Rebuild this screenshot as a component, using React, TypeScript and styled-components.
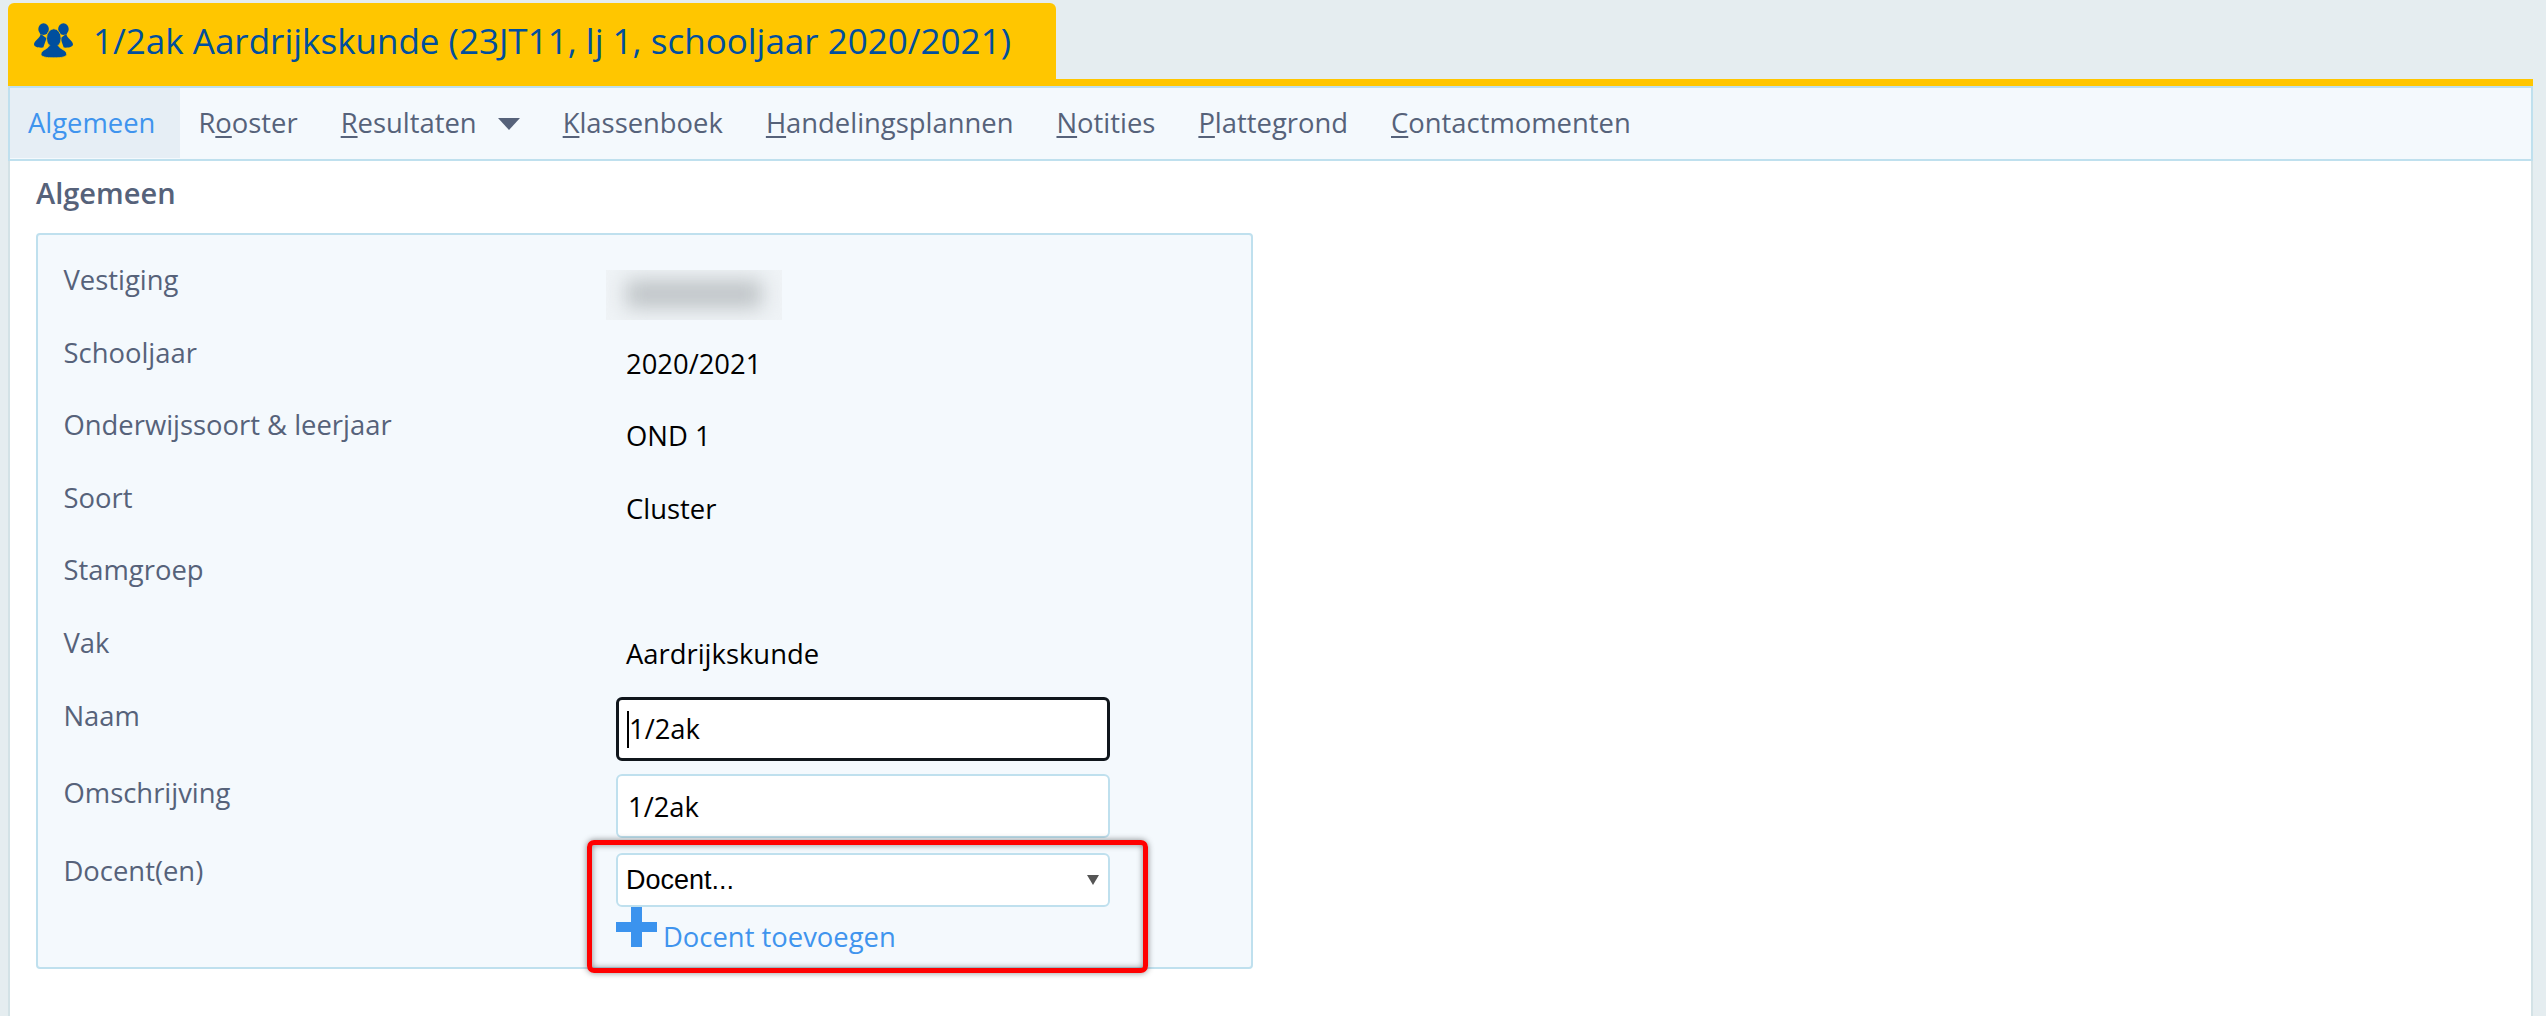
import React from "react";
import styled, { createGlobalStyle } from "styled-components";

const GlobalStyle = createGlobalStyle`
    html, body {
        margin: 0;
        padding: 0;
        height: 100%;
        background: #e5edf0;
        font-family: "Open Sans", sans-serif;
    }
    #root {
        height: 100%;
    }
`;

const rows = [
    { label: "Schooljaar", value: "2020/2021" },
    { label: "Onderwijssoort & leerjaar", value: "OND 1" },
    { label: "Soort", value: "Cluster" },
    { label: "Stamgroep", value: "" },
    { label: "Vak", value: "Aardrijkskunde" },
];

const GroupIcon: React.FC = () => (
    <svg width="39" height="35" viewBox="0 0 118 105" fill="#004f9e">
        <ellipse cx="29" cy="18" rx="16" ry="18" />
        <ellipse cx="89" cy="18" rx="16" ry="18" />
        <path d="M20 32 C20 46 0 52 0 64 C0 72 12 75 28 74 L38 46 Z" />
        <path d="M98 32 C98 46 118 52 118 64 C118 72 106 75 90 74 L80 46 Z" />
        <ellipse cx="60" cy="46" rx="22" ry="29" stroke="#ffc600" strokeWidth="2.5" />
        <path
            d="M46 66 C46 78 21 80 21 94 C21 102 36 105 60 105 C84 105 99 102 99 94 C99 80 74 78 74 66 Z"
            stroke="#ffc600"
            strokeWidth="2.5"
        />
        <ellipse cx="60" cy="58" rx="14" ry="16" />
    </svg>
);

const PlusIcon: React.FC = () => (
    <svg width="41" height="40" viewBox="0 0 41 40" fill="#3b93ee">
        <path d="M15 0h11v15h15v10H26v15H15V25H0V15h15z" />
    </svg>
);

export default function App() {
    return (
        <Page>
            <GlobalStyle />
            <TabStrip>
                <Tab>
                    <GroupIcon />
                    <TabTitle>1/2ak Aardrijkskunde (23JT11, lj 1, schooljaar 2020/2021)</TabTitle>
                </Tab>
            </TabStrip>
            <Panel>
                <Nav>
                    <NavItem $active>Algemeen</NavItem>
                    <NavItem>R<u>o</u>oster</NavItem>
                    <NavItem>
                        <u>R</u>esultaten
                        <Caret />
                    </NavItem>
                    <NavItem><u>K</u>lassenboek</NavItem>
                    <NavItem><u>H</u>andelingsplannen</NavItem>
                    <NavItem><u>N</u>otities</NavItem>
                    <NavItem><u>P</u>lattegrond</NavItem>
                    <NavItem><u>C</u>ontactmomenten</NavItem>
                </Nav>
                <Content>
                    <Heading>Algemeen</Heading>
                    <FieldBox>
                        <Row>
                            <Label>Vestiging</Label>
                            <BlurBox>
                                <BlurText />
                            </BlurBox>
                        </Row>
                        {rows.map((row) => (
                            <Row key={row.label}>
                                <Label>{row.label}</Label>
                                <Value>{row.value}</Value>
                            </Row>
                        ))}
                        <InputRow>
                            <Label>Naam</Label>
                            <InputCell>
                                <TextInput $focused defaultValue="1/2ak" />
                                <TextCaret />
                            </InputCell>
                        </InputRow>
                        <InputRow>
                            <Label>Omschrijving</Label>
                            <InputCell>
                                <TextInput defaultValue="1/2ak" />
                            </InputCell>
                        </InputRow>
                        <DocentRow>
                            <Label>Docent(en)</Label>
                            <InputCell>
                                <SelectBox>
                                    <Select defaultValue="">
                                        <option value="">Docent...</option>
                                    </Select>
                                </SelectBox>
                                <AddLink>
                                    <PlusIcon />
                                    <AddText>Docent toevoegen</AddText>
                                </AddLink>
                                <Highlight />
                            </InputCell>
                        </DocentRow>
                    </FieldBox>
                </Content>
            </Panel>
        </Page>
    );
}

const Page = styled.div`
    box-sizing: border-box;
    height: 100vh;
    padding: 3px 13px 0 8px;
    display: flex;
    flex-direction: column;
    overflow: hidden;
`;

const TabStrip = styled.div`
    display: flex;
    height: 76px;
    border-bottom: 7px solid #ffc600;
    flex: none;
`;

const Tab = styled.div`
    box-sizing: border-box;
    width: 1048px;
    height: 83px;
    padding: 0 0 8px 26px;
    display: flex;
    align-items: center;
    gap: 20px;
    background: #ffc600;
    border-radius: 6px 6px 0 0;
`;

const TabTitle = styled.span`
    color: #004f9e;
    font-size: 35px;
    white-space: nowrap;
`;

const Panel = styled.div`
    flex: 1;
    display: flex;
    flex-direction: column;
`;

const Nav = styled.div`
    display: flex;
    height: 71px;
    background: #f4f9fd;
    border: 2px solid #bfe0ee;
    border-bottom-width: 2px;
    flex: none;
`;

const NavItem = styled.div<{ $active?: boolean }>`
    box-sizing: border-box;
    display: flex;
    align-items: center;
    height: 70px;
    padding: 0 25px 2px 18px;
    white-space: pre;
    font-size: 27.4px;
    color: ${(p) => (p.$active ? "#3f94ee" : "#56627a")};
    background: ${(p) => (p.$active ? "#e6eef5" : "transparent")};

    u {
        text-underline-offset: 3px;
        text-decoration-thickness: 2px;
    }
`;

const Caret = styled.span`
    width: 0;
    height: 0;
    margin-left: 21px;
    margin-top: 4px;
    border-left: 11px solid transparent;
    border-right: 11px solid transparent;
    border-top: 12px solid #56627a;
`;

const Content = styled.div`
    flex: 1;
    padding: 0 0 0 26px;
    background: #fff;
    border-left: 2px solid #d3e2e6;
    border-right: 2px solid #d3e2e6;
`;

const Heading = styled.h2`
    margin: 0;
    height: 72px;
    line-height: 64px;
    font-size: 29px;
    font-weight: 600;
    color: #56627a;
`;

const FieldBox = styled.div`
    box-sizing: border-box;
    width: 1217px;
    height: 736px;
    padding: 25px 0 0 25.5px;
    background: #f4f9fd;
    border: 2px solid #bfe0ee;
    border-radius: 4px;
`;

const Row = styled.div`
    display: grid;
    grid-template-columns: 553.5px 1fr;
    height: 72.6px;
`;

const InputRow = styled(Row)`
    height: 77.8px;
    grid-template-columns: 552.5px 1fr;
`;

const DocentRow = styled(InputRow)`
    height: auto;
`;

const Label = styled.div`
    font-size: 27.4px;
    line-height: 40px;
    color: #56627a;
`;

const Value = styled.div`
    padding: 11px 0 0 9px;
    font-size: 27.4px;
    line-height: 40px;
    color: #000;
`;

const BlurBox = styled.div`
    box-sizing: border-box;
    width: 176px;
    height: 50px;
    margin: 10px 0 0 -11px;
    padding: 10px 20px;
    background: #eff3f6;
    overflow: hidden;
`;

const BlurText = styled.div`
    width: 136px;
    height: 28px;
    background: #bfc4c7;
    filter: blur(10px);
`;

const InputCell = styled.div`
    position: relative;
    padding-top: 1px;
`;

const TextInput = styled.input<{ $focused?: boolean }>`
    box-sizing: border-box;
    display: block;
    width: 494px;
    height: 64px;
    padding: 0 10px;
    font-family: "Open Sans", sans-serif;
    font-size: 27.4px;
    color: #000;
    background: #fff;
    outline: none;
    border: ${(p) => (p.$focused ? "3px solid #10161c" : "2px solid #bfe0ee")};
    border-radius: 6px;
`;

const TextCaret = styled.span`
    position: absolute;
    left: 11px;
    top: 15px;
    width: 2px;
    height: 37px;
    background: #000;
`;

const SelectBox = styled.div`
    position: relative;
    width: 494px;
    margin-top: 1px;

    &::after {
        content: "";
        position: absolute;
        right: 11px;
        top: 22px;
        border-left: 6px solid transparent;
        border-right: 6px solid transparent;
        border-top: 10px solid #555;
    }
`;

const Select = styled.select`
    display: block;
    box-sizing: border-box;
    width: 100%;
    height: 54px;
    padding: 0 8px;
    appearance: none;
    font-family: "Liberation Sans", Arial, sans-serif;
    font-size: 27px;
    color: #000;
    background: #fff;
    outline: none;
    border: 2px solid #bfe0ee;
    border-radius: 6px;
`;

const AddLink = styled.div`
    display: flex;
    align-items: flex-end;
    gap: 6px;
    height: 40px;
`;

const AddText = styled.span`
    font-size: 27.4px;
    line-height: 40px;
    margin-bottom: -10px;
    color: #3f94ee;
`;

const Highlight = styled.div`
    position: absolute;
    left: -29px;
    top: -11px;
    box-sizing: border-box;
    width: 561px;
    height: 133px;
    border: 5px solid #f00;
    border-radius: 7px;
    box-shadow: 0 0 6px rgba(0, 0, 0, 0.45), inset 0 0 6px rgba(0, 0, 0, 0.45);
    pointer-events: none;
`;
